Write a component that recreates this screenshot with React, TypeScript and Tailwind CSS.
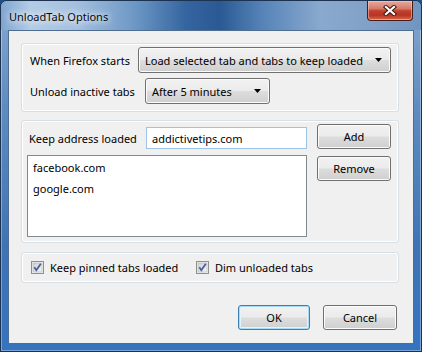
import React from "react";

const btnBase =
  "flex items-center rounded-[3px] border bg-[linear-gradient(180deg,#f2f2f2_0%,#ebebeb_48%,#dddddd_52%,#cfcfcf_100%)]";

function WinButton({
  children,
  className = "",
  isDefault = false,
}: {
  children: React.ReactNode;
  className?: string;
  isDefault?: boolean;
}) {
  return (
    <div
      className={`${btnBase} justify-center ${
        isDefault
          ? "border-[#3c7fb1] shadow-[inset_0_0_0_1px_#a6dcf7,inset_0_0_0_2px_#e4f4fc]"
          : "border-[#707070] shadow-[inset_0_0_0_1px_#fbfbfb]"
      } ${className}`}
    >
      {children}
    </div>
  );
}

function Arrow() {
  return (
    <svg width="7" height="4" viewBox="0 0 7 4" className="shrink-0">
      <path d="M0 0H7L3.5 4Z" fill="#000" />
    </svg>
  );
}

function Dropdown({ text, className = "" }: { text: string; className?: string }) {
  return (
    <div
      className={`${btnBase} justify-between border-[#707070] shadow-[inset_0_0_0_1px_#fbfbfb] h-[26px] pl-[6px] pr-[8px] ${className}`}
    >
      <span className="whitespace-nowrap">{text}</span>
      <Arrow />
    </div>
  );
}

function Checkbox() {
  return (
    <svg width="13" height="13" viewBox="0 0 13 13" className="shrink-0">
      <defs>
        <linearGradient id="cbg" x1="0" y1="0" x2="1" y2="1">
          <stop offset="0" stopColor="#cbcfd5" />
          <stop offset="1" stopColor="#f7f7f7" />
        </linearGradient>
      </defs>
      <rect x="0.5" y="0.5" width="12" height="12" fill="#f4f4f4" stroke="#8e8f8f" />
      <rect x="2" y="2" width="9" height="9" fill="url(#cbg)" stroke="#aeb3b9" strokeWidth="0.6" />
      <path d="M3.3 6.3L5.3 9.2L9.8 2.8" fill="none" stroke="#4a5f97" strokeWidth="1.8" />
    </svg>
  );
}

function CloseX() {
  return (
    <svg width="14" height="11" viewBox="0 0 14 11">
      <path d="M3 2L11 9M11 2L3 9" stroke="#3a1a14" strokeWidth="4.2" strokeLinecap="square" />
      <path d="M3 2L11 9M11 2L3 9" stroke="#ffffff" strokeWidth="2.2" strokeLinecap="square" />
    </svg>
  );
}

export default function App() {
  return (
    <div className="w-[422px] h-[352px] overflow-hidden bg-[#1e4f8a] font-['Noto_Sans','Open_Sans',sans-serif] text-[11px] leading-none text-black">
      <div className="w-full h-full flex flex-col rounded-t-[7px] border border-[#1c324f] bg-[linear-gradient(180deg,#86a8cf_0%,#5f8cc0_30%,#3f74b4_70%,#3573c0_100%)] shadow-[inset_0_0_0_1px_rgba(255,255,255,0.35)]">
        {/* Title bar */}
        <div className="h-[29px] shrink-0 flex items-start justify-between pl-[8px] pr-[8px] rounded-t-[6px] bg-[linear-gradient(90deg,#7fa5cf_0%,#b3cce6_7%,#a4c0df_18%,#6c97c5_32%,#3565a0_44%,#2a5993_52%,#5583b7_62%,#89a9ce_76%,#7f9fc6_90%,#7095c0_100%)]">
          <span className="mt-[10px] text-[11px] text-[#0a0a0a] [text-shadow:0_0_6px_#ffffff,0_0_10px_#ffffff] whitespace-nowrap">
            UnloadTab Options
          </span>
          <div className="w-[46px] h-[20px] flex items-center justify-center rounded-b-[4px] border border-t-0 border-[#4a1c16] bg-[linear-gradient(180deg,#e9a99b_0%,#d67a6a_40%,#c0402e_52%,#b83422_75%,#d9694c_100%)] shadow-[inset_0_0_0_1px_rgba(255,210,200,0.5)]">
            <CloseX />
          </div>
        </div>

        {/* Client area */}
        <div className="flex-1 px-[7px] pb-[7px]">
          <div className="h-full border border-[#4f6d90] bg-[#f0f0f0] flex flex-col pl-[12px] pr-[14px] pt-[12px]">
            {/* Panel 1 */}
            <div className="rounded-[3px] border border-[#d5dfe5] shadow-[inset_0_0_0_1px_#ffffff] pl-[8px] pr-[7px] pt-[3px] pb-[7px] flex flex-col gap-[5px]">
              <div className="flex items-center">
                <span className="w-[108px] shrink-0 whitespace-nowrap">When Firefox starts</span>
                <Dropdown text="Load selected tab and tabs to keep loaded" className="flex-1" />
              </div>
              <div className="flex items-center">
                <span className="w-[115px] shrink-0 whitespace-nowrap">Unload inactive tabs</span>
                <Dropdown text="After 5 minutes" className="w-[125px]" />
              </div>
            </div>

            {/* Panel 2 */}
            <div className="mt-[8px] rounded-[3px] border border-[#d5dfe5] shadow-[inset_0_0_0_1px_#ffffff] pl-[5px] pr-[7px] pt-[3px] pb-[5px] flex items-start justify-between">
              <div className="w-[280px] pt-[3px] flex flex-col">
                <div className="flex items-center">
                  <span className="w-[119px] shrink-0 pl-[2px] whitespace-nowrap">Keep address loaded</span>
                  <div className="w-[161px] h-[22px] flex items-center border border-[#9fc3e6] bg-white pl-[5px]">
                    addictivetips.com
                  </div>
                </div>
                <div className="mt-[6px] h-[82px] border border-[#828790] bg-white pl-[5px] pt-px flex flex-col">
                  <div className="h-[21px] flex items-center">facebook.com</div>
                  <div className="h-[21px] flex items-center">google.com</div>
                </div>
              </div>
              <div className="w-[74px] flex flex-col gap-[7px]">
                <WinButton className="h-[25px]">Add</WinButton>
                <WinButton className="h-[25px]">Remove</WinButton>
              </div>
            </div>

            {/* Panel 3 */}
            <div className="mt-[9px] h-[31px] rounded-[3px] border border-[#d5dfe5] shadow-[inset_0_0_0_1px_#ffffff] pl-[9px] flex items-center">
              <div className="w-[165px] flex items-center gap-[6px]">
                <Checkbox />
                <span className="whitespace-nowrap">Keep pinned tabs loaded</span>
              </div>
              <div className="flex items-center gap-[6px]">
                <Checkbox />
                <span className="whitespace-nowrap">Dim unloaded tabs</span>
              </div>
            </div>

            {/* Buttons */}
            <div className="mt-[22px] flex justify-end gap-[13px] pr-[2px]">
              <WinButton isDefault className="w-[72px] h-[25px]">OK</WinButton>
              <WinButton className="w-[74px] h-[25px]">Cancel</WinButton>
            </div>
          </div>
        </div>
      </div>
    </div>
  );
}
